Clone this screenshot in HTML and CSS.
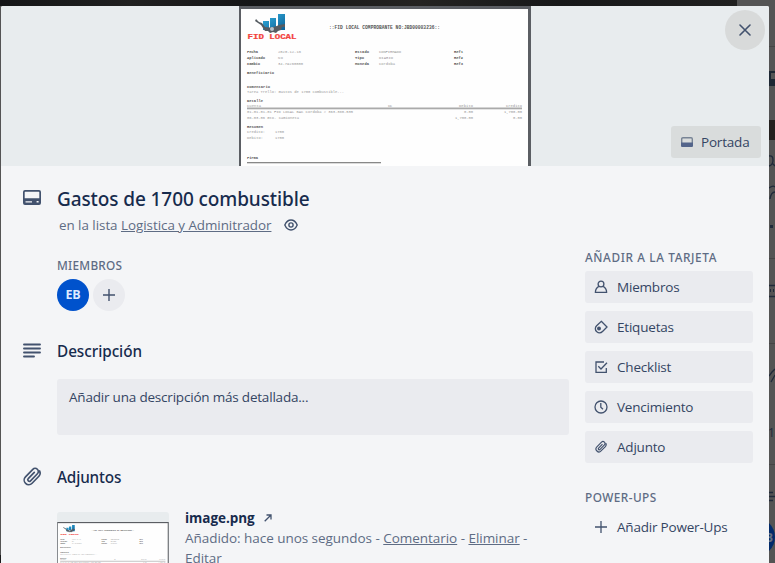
FILE: index.html
```
<!DOCTYPE html>
<html lang="es">
<head>
<meta charset="utf-8">
<title>Gastos de 1700 combustible</title>
<link rel="stylesheet" href="styles.css">
</head>
<body>
<svg class="defs" aria-hidden="true">
  <defs>
    <linearGradient id="bar" x1="0" y1="0" x2="1" y2="1"><stop offset="0" stop-color="#35b2e0"/><stop offset="1" stop-color="#0b5f97"/></linearGradient>
    <symbol id="clip" viewBox="0 0 24 24"><path d="M19.5 11.2l-7.4 7.6a5 5 0 0 1-7.2-7l8-8.2a3.500 3.500 0 0 1 5 4.900l-7.500 7.700a1.700 1.700 0 0 1-2.500-2.400l6.600-6.800M19.500 11.200a5.200 5.200 0 0 0 .8-5.800" /></symbol>
    <symbol id="voucher" viewBox="0 0 292 196">
      <rect width="292" height="196" fill="#5b5e63"/>
      <rect x="2" y="3" width="287" height="193" fill="#fefefe"/>
      <g>
        <path d="M24 15h6v9h-6zM31 12h6v12h-6zM39 8h7v16h-7z" fill="url(#bar)"/>
        <path d="M17 13l3 3 3 1 3 4c5 1 10 0 14-2l6-1v3h-3l-1 3-3 1-2 2-3-1-3 1-2-2h-3l-2-3-2-3-6-4z" fill="#565c62"/>
        <circle cx="33" cy="23" r="2" fill="#b4c1c9"/>
        <text class="doc-logo" x="8.500" y="33" textLength="49" lengthAdjust="spacingAndGlyphs">FID LOCAL</text>
      </g>
      <g class="doc-strong">
        <text class="doc-title" x="90" y="22.500" textLength="111">::FID LOCAL COMPROBANTE NO:JBD00003236::</text>
        <text x="8" y="47" textLength="11">Fecha</text><text x="8" y="53" textLength="18">Aplicado</text><text x="8" y="58.500" textLength="13">Cambio</text>
        <text x="116" y="47" textLength="14">Estado</text><text x="116" y="53" textLength="9">Tipo</text><text x="116" y="58.500" textLength="14">Moneda</text>
        <text x="215" y="47" textLength="9">Ref1</text><text x="215" y="53" textLength="9">Ref2</text><text x="215" y="58.500" textLength="9">Ref3</text>
        <text x="8" y="67.500" textLength="27">Beneficiario</text>
        <text x="8" y="81.500" textLength="23">Comentario</text>
        <text x="8" y="95.500" textLength="16">Detalle</text>
        <text x="8" y="121.500" textLength="16">Resumen</text>
        <text x="8" y="153" textLength="11">Firma</text>
      </g>
      <g class="doc-light">
        <text x="39" y="47" textLength="23">2020-12-16</text><text x="39" y="53" textLength="5">No</text><text x="39" y="58.500" textLength="25">34.79260000</text>
        <text x="140" y="47" textLength="22">CONFIRMADO</text><text x="140" y="53" textLength="14">DIARIO</text><text x="140" y="58.500" textLength="16">Cordoba</text>
        <text x="8" y="86.500" textLength="97">Tarea Trello: Gastos de 1700 combustible...</text>
        <text x="8" y="100.500" textLength="14">Cuenta</text><text x="149" y="100.500" textLength="4">CC</text><text x="220" y="100.500" textLength="14">Debito</text><text x="267" y="100.500" textLength="16">Credito</text>
        <text x="8" y="107" textLength="106">01-01-01-01 FID LOCAL BAC Cordoba # 363-380-535</text>
        <text x="225" y="107" textLength="9">0.00</text><text x="265" y="107" textLength="18">1,700.00</text>
        <text x="8" y="113" textLength="52">06-03-06 Gto. Camioneta</text>
        <text x="216" y="113" textLength="18">1,700.00</text><text x="274" y="113" textLength="9">0.00</text>
        <text x="8" y="126.500" textLength="18">Credito:</text><text x="36" y="126.500" textLength="9">1700</text>
        <text x="8" y="132.500" textLength="16">Debito:</text><text x="36" y="132.500" textLength="9">1700</text>
      </g>
      <rect x="8" y="101.500" width="275" height="1.800" fill="#aaa"/>
      <rect x="8" y="156" width="134" height="1.300" fill="#888"/>
    </symbol>
  </defs>
</svg>

<div class="board">
  <main class="card">
    <header class="cover">
      <svg class="cover-image" viewBox="0 0 292 160" preserveAspectRatio="xMinYMin slice"><use href="#voucher" width="292" height="196"/></svg>
      <button class="close" aria-label="Cerrar"><svg viewBox="0 0 12 12"><path d="M1 1l10 10M11 1L1 11"/></svg></button>
      <button class="cover-button"><svg viewBox="0 0 12 10"><rect x=".7" y=".7" width="10.600" height="8.600" rx="1.200" fill="none" stroke="#44546f" stroke-opacity=".65" stroke-width="1.400"/><path d="M0 5.500h12V8.500a1.500 1.500 0 0 1-1.500 1.500h-9A1.500 1.500 0 0 1 0 8.500z" fill="#53648a"/></svg><span>Portada</span></button>
    </header>

    <div class="columns">
      <div class="content">
        <section class="row heading">
          <svg class="icon" viewBox="0 0 18 15"><path fill-rule="evenodd" d="M2 0h14a2 2 0 0 1 2 2v11a2 2 0 0 1-2 2H2a2 2 0 0 1-2-2V2a2 2 0 0 1 2-2zM2.300 1.700a.6.6 0 0 0-.6.600v6h14.600v-6a.6.6 0 0 0-.6-.6zM2.500 11.200v1.300h6.500v-1.300zM13.600 11v1.500h2v-1.500z"/></svg>
          <div>
            <h1>Gastos de 1700 combustible</h1>
            <p class="in-list"><span>en la lista <u>Logistica y Adminitrador</u></span>
              <svg viewBox="0 0 14 12"><path d="M.8 6C2.300 2.600 4.300 1 7 1s4.700 1.600 6.200 5C11.700 9.400 9.700 11 7 11S2.300 9.400.8 6z"/><circle cx="7" cy="6" r="2.100"/></svg></p>
          </div>
        </section>

        <section class="members">
          <h3 class="label">MIEMBROS</h3>
          <div class="avatars"><span class="avatar">EB</span><button class="add" aria-label="Añadir"><svg viewBox="0 0 12 12"><path d="M6 0v12M0 6h12"/></svg></button></div>
        </section>

        <section class="row description">
          <svg class="icon lines" viewBox="0 0 18 15"><path d="M1 1.500h16M1 5.500h16M1 9.500h16M1 13.500h10"/></svg>
          <div class="grow">
            <h2>Descripción</h2>
            <div class="placeholder"><span>Añadir una descripción más detallada...</span></div>
          </div>
        </section>

        <section class="row attachments">
          <svg class="icon clip"><use href="#clip"/></svg>
          <div class="grow">
            <h2 class="tight">Adjuntos</h2>
            <div class="attachment">
              <div class="thumb"><svg viewBox="0 0 292 196"><use href="#voucher" width="292" height="196"/></svg></div>
              <div class="details">
                <p><b>image.png</b> <svg class="arrow" viewBox="0 0 8 8"><path d="M.7 7.300L7 1M2.500 1H7v4.500"/></svg></p>
                <p class="meta">Añadido: hace unos segundos - <u>Comentario</u> - <u>Eliminar</u> -<br><u>Editar</u></p>
              </div>
            </div>
          </div>
        </section>
      </div>

      <aside class="sidebar">
        <h3 class="label add-label">AÑADIR A LA TARJETA</h3>
        <button class="action"><svg viewBox="0 0 14 14"><circle cx="7" cy="4" r="2.900"/><path d="M4.800 6.400C2.800 7.500 1.400 9.500 1.400 12.300h11.200c0-2.800-1.400-4.800-3.400-5.900"/></svg><span>Miembros</span></button>
        <button class="action"><svg viewBox="0 0 14 14"><path d="M7.300 1.300L13 7l-4.200 4.200c-1.800 1.800-4.200 2-6 .6-1.900-1.500-1.900-4.300-.2-6z"/><circle cx="5" cy="8.500" r="1.300" fill="#42526e"/></svg><span>Etiquetas</span></button>
        <button class="action"><svg viewBox="0 0 14 14"><path d="M10 2H2v10.300h10.300V8M4.300 6.200l2.700 2.800 6-6.300"/></svg><span>Checklist</span></button>
        <button class="action"><svg viewBox="0 0 14 14"><circle cx="7" cy="7" r="6"/><path d="M6.800 3v4.200l2.200 2"/></svg><span>Vencimiento</span></button>
        <button class="action"><svg class="small-clip"><use href="#clip"/></svg><span>Adjunto</span></button>
        <h3 class="label power-label">POWER-UPS</h3>
        <button class="action plain"><svg viewBox="0 0 14 14"><path d="M7 1v12M1 7h12"/></svg><span>Añadir Power-Ups</span></button>
      </aside>
    </div>
  </main>
  <div class="backdrop">
    <svg viewBox="0 0 6 563"><path fill="#24211f" d="M0 120h6v20H0z"/><path stroke="#454545" d="M0 46.500h6M0 258.500h6M0 343.500h6M0 464.500h6"/><path fill="#1d2733" d="M0 71h6v15H0z"/><path fill="#555" d="M2 73h4v6H2z"/><path d="M0 156q4-1 4 4t-4 6M3 163l3 3M0 188q4-3 6-1M1 199q1-7 5-7M0 285.500h6M0 296.500h6M0 376l3-4 3-3M2 382l4-7M0 492.500h4M0 496.500h6M0 500.500h4" fill="none" stroke="#202a3a" stroke-width="1.300"/><path fill="#202a3a" d="M1 225h3v3H1zM1 289h1v3H1zM4 289h1v3H4z"/><text x="-1" y="437" font-size="12" fill="#202a3a">1</text><circle cx="-13" cy="537" r="19" fill="#022b6b"/><text x="-4" y="542" font-size="12" font-weight="700" fill="#687282">B</text></svg>
  </div>
</div>
</body>
</html>
```
FILE: styles.css
```
* { box-sizing: border-box; }
body { margin: 0; font-family: "Open Sans", "Noto Sans", sans-serif; font-size: 13.5px; line-height: 20px; letter-spacing: -.2px; color: #172b4d; }
h1, h2, h3, p { margin: 0; font-weight: 500; }
h1, h2, h3 { font-family: "Noto Sans", "Open Sans", sans-serif; }
p { font-weight: 400; }
button { border: 0; padding: 0; font: inherit; letter-spacing: inherit; color: inherit; }
svg { display: block; flex: none; }
span, b, h1, h2, h3, p { white-space: nowrap; }
.defs { position: absolute; width: 0; height: 0; }
.board { display: flex; width: 775px; height: 563px; padding: 6px 0 0 1px; overflow: hidden; background: linear-gradient(90deg, #151617, #202020 130px, #151617 250px, #242321 420px, #171819 560px, #202020 737px, #545454 737px) 0 0 / 100% 6px no-repeat, linear-gradient(#1b1b1b, #1b1b1b) 0 555px / 1px 8px no-repeat, #545454; }
.card { width: 768px; height: 557px; overflow: hidden; background: #f4f5f7; border-radius: 2px 2px 0 0; }
.backdrop { width: 6px; margin-top: -6px; }
.backdrop svg { width: 6px; height: 563px; overflow: hidden; }

.cover { position: relative; height: 160px; padding-left: 238px; background: #e8ecee; }
.cover-image { width: 292px; height: 160px; }
.close { position: absolute; top: 4px; right: 4px; display: grid; place-items: center; width: 40px; height: 40px; border-radius: 50%; background: #d8dada; }
.close svg { width: 12px; height: 12px; fill: none; stroke: #42526e; stroke-width: 1.6; stroke-linecap: round; }
.cover-button { position: absolute; right: 8px; bottom: 8px; display: flex; align-items: center; gap: 8px; width: 90px; height: 32px; padding-left: 10px; border-radius: 3px; background: #d9dcdc; color: #344563; }
.cover-button svg { width: 12px; height: 10px; }

.columns { display: flex; gap: 16px; padding-left: 22px; }
.content { width: 546px; }
.row { display: flex; gap: 16px; }
.grow { flex: 1; }
.icon { width: 18px; height: 15px; fill: #42526e; }
.heading { padding-top: 21px; }
.heading .icon { margin-top: 3px; }
h1 { font-size: 19px; line-height: 24px; letter-spacing: -.1px; }
h2 { font-size: 15.3px; line-height: 20px; letter-spacing: -.05px; }
h2.tight { letter-spacing: -.15px; }
.in-list { display: flex; align-items: center; gap: 13px; margin: 4px 0 0 2px; font-size: 13.4px; letter-spacing: -.03px; color: #5e6c84; }
.in-list svg { width: 14px; height: 12px; fill: none; stroke: #42526e; stroke-width: 1.4; }
.members { padding: 20px 0 0 34px; }
.label { font-size: 11.8px; line-height: 20px; letter-spacing: .25px; color: #5e6c84; }
.avatars { display: flex; gap: 4px; margin-top: 4px; }
.avatar, .add { display: grid; place-items: center; width: 32px; height: 32px; border-radius: 50%; }
.avatar { background: #0052cc; color: #deebff; font-size: 12.5px; font-weight: 700; }
.add { background: #eaebef; }
.add svg { width: 12px; height: 12px; stroke: #42526e; stroke-width: 1.4; }
.description { padding-top: 30px; }
.description .icon { margin-top: 2px; }
.lines { fill: none; stroke: #42526e; stroke-width: 1.9; stroke-linecap: round; }
.placeholder { height: 56px; margin-top: 18px; padding: 8px 12px; border-radius: 3px; background: #eaebef; color: #344563; }
.attachments { padding-top: 32px; }
.icon.clip { width: 22px; height: 22px; margin: -1px -2px 0; fill: none; stroke: #42526e; stroke-width: 1.8; stroke-linecap: round; }
.attachment { display: flex; gap: 16px; margin-top: 25px; }
.thumb { width: 112px; height: 80px; padding-top: 10px; border-radius: 3px; overflow: hidden; background: #e8ecee; }
.thumb svg { width: 112px; height: 75px; }
.details { margin-top: -4px; }
.details p:first-child { display: flex; align-items: center; gap: 9px; }
.details b { font-weight: 700; letter-spacing: -.05px; }
.arrow { width: 8px; height: 8px; fill: none; stroke: #42526e; stroke-width: 1.3; }
.meta { color: #5e6c84; letter-spacing: -.04px; }

.sidebar { width: 168px; padding-top: 81px; }
.action { display: flex; align-items: center; gap: 9px; width: 168px; height: 32px; margin-top: 8px; padding-left: 9px; border-radius: 3px; background: #eaebef; color: #344563; }
.label + .action { margin-top: 4px; }
.action svg { width: 14px; height: 14px; fill: none; stroke: #42526e; stroke-width: 1.3; }
.action .small-clip { stroke-width: 2; }
.add-label { letter-spacing: .62px; }
.power-label { margin-top: 24px; letter-spacing: .45px; }
.action.plain { background: none; }

.doc-logo { font: 700 6.5px "Liberation Mono", monospace; letter-spacing: 0; fill: #f2413c; stroke: #f2413c; stroke-width: .2; }
.doc-strong { font: 700 3.8px "Liberation Mono", monospace; letter-spacing: 0; fill: #555; }
.doc-title { font-size: 4.6px; }
.doc-light { font: 3.8px "Liberation Mono", monospace; letter-spacing: 0; fill: #999; }
```
